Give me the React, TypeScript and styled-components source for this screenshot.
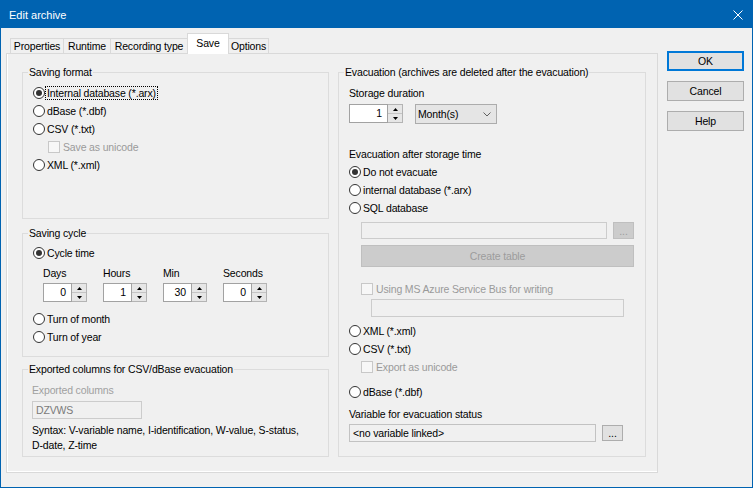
import styled, { createGlobalStyle } from 'styled-components';

type TabItem = { label: string; w: number; active?: boolean };

const TABS: TabItem[] = [
  { label: 'Properties', w: 54 },
  { label: 'Runtime', w: 48 },
  { label: 'Recording type', w: 78 },
  { label: 'Save', w: 42, active: true },
  { label: 'Options', w: 41 },
];

const CYCLE = [
  { label: 'Days', value: '0' },
  { label: 'Hours', value: '1' },
  { label: 'Min', value: '30' },
  { label: 'Seconds', value: '0' },
];

const GlobalStyle = createGlobalStyle`
  * { box-sizing: border-box; }
  html, body { margin: 0; padding: 0; background: #f0f0f0; }
  body {
    font-family: "Liberation Sans", Arial, sans-serif;
    font-size: 10.5px;
    letter-spacing: -0.15px;
    color: #000;
  }
`;

const Window = styled.div`
  width: 753px;
  height: 488px;
  display: flex;
  flex-direction: column;
  background: #f0f0f0;
  overflow: hidden;
`;

const TitleBar = styled.div`
  height: 28px;
  flex: none;
  display: flex;
  align-items: center;
  justify-content: space-between;
  padding: 2px 10px 0 9px;
  background: #0063b1;
  color: #fff;
  font-size: 11px;
  letter-spacing: 0;
`;

const Body = styled.div`
  flex: 1;
  display: flex;
  align-items: flex-start;
  padding: 5px 0 0 5px;
  border: 1px solid #0063b1;
  border-top: none;
`;

const TabArea = styled.div`
  width: 652px;
  display: flex;
  flex-direction: column;
`;

const TabStrip = styled.div`
  height: 20px;
  display: flex;
  align-items: flex-end;
  padding-left: 4px;
`;

const Tab = styled.div<{ $w: number; $active?: boolean }>`
  position: relative;
  z-index: ${(p) => (p.$active ? 2 : 1)};
  width: ${(p) => p.$w}px;
  height: ${(p) => (p.$active ? 21 : 15)}px;
  margin-bottom: ${(p) => (p.$active ? -1 : 0)}px;
  padding-top: ${(p) => (p.$active ? 2 : 0)}px;
  border: 1px solid #d9d9d9;
  border-bottom: none;
  background: ${(p) => (p.$active ? '#ffffff' : '#f0f0f0')};
  line-height: 14px;
  text-align: center;
  white-space: nowrap;

  & + & {
    margin-left: -1px;
  }
`;

const Panel = styled.div`
  height: 420px;
  border: 1px solid #d9d9d9;
  box-shadow: inset 1px -1px 0 #ffffff;
  display: grid;
  grid-template-columns: 307px 308px;
  column-gap: 9px;
  align-items: start;
  padding: 11px 0 0 15px;
`;

const Column = styled.div`
  display: flex;
  flex-direction: column;
`;

const GroupBox = styled.fieldset<{ $h: number; $mt?: number }>`
  margin: ${(p) => p.$mt ?? 0}px 0 0 0;
  padding: 0;
  min-width: 0;
  height: ${(p) => p.$h}px;
  border: 1px solid #dcdcdc;

  & > legend {
    margin-left: 5px;
    padding: 0 1px;
    line-height: 14px;
    white-space: nowrap;
  }
`;

const GroupInner = styled.div<{ $pt: number; $pl: number }>`
  display: flex;
  flex-direction: column;
  align-items: flex-start;
  padding: ${(p) => p.$pt}px 0 0 ${(p) => p.$pl}px;
`;

const Caption = styled.div<{ $mt?: number; $muted?: boolean }>`
  height: 18px;
  line-height: 18px;
  margin-top: ${(p) => p.$mt ?? 0}px;
  color: ${(p) => (p.$muted ? '#a0a0a0' : '#000')};
  white-space: nowrap;
`;

const OptionRow = styled.div<{ $mt?: number; $indent?: number; $disabled?: boolean; $gap: number }>`
  display: flex;
  align-items: center;
  gap: ${(p) => p.$gap}px;
  height: 18px;
  margin-top: ${(p) => p.$mt ?? 0}px;
  margin-left: ${(p) => p.$indent ?? 0}px;
  color: ${(p) => (p.$disabled ? '#9a9a9a' : '#000')};
  white-space: nowrap;
`;

const RadioMark = styled.span<{ $checked?: boolean }>`
  flex: none;
  width: 12px;
  height: 12px;
  border-radius: 50%;
  border: 1px solid #333333;
  background: #ffffff;
  display: flex;
  align-items: center;
  justify-content: center;

  &::after {
    content: '';
    display: ${(p) => (p.$checked ? 'block' : 'none')};
    width: 6px;
    height: 6px;
    border-radius: 50%;
    background: #333333;
  }
`;

const CheckMark = styled.span`
  flex: none;
  width: 12px;
  height: 12px;
  border: 1px solid #c8c8c8;
  background: #f7f7f7;
`;

const OptionText = styled.span<{ $focused?: boolean }>`
  padding: 0 1px;
  line-height: 12px;
  outline: ${(p) => (p.$focused ? '1px dotted #000' : 'none')};
`;

const CycleGrid = styled.div`
  display: grid;
  grid-template-columns: repeat(4, 60px);
  margin: 2px 0 0 10px;
`;

const CycleCell = styled.div`
  display: flex;
  flex-direction: column;
  gap: 1px;
`;

const SpinBox = styled.div`
  display: flex;
  height: 19px;
`;

const SpinInput = styled.div<{ $w: number }>`
  width: ${(p) => p.$w}px;
  height: 100%;
  border: 1px solid #a2a2a2;
  background: #ffffff;
  text-align: right;
  padding-right: 5px;
  line-height: 17px;
`;

const SpinButtons = styled.div`
  width: 15px;
  height: 100%;
  display: flex;
  flex-direction: column;
  border: 1px solid #b4b4b4;
  border-left: none;
  background: #e6e6e6;
`;

const SpinHalf = styled.div<{ $lower?: boolean }>`
  flex: 1;
  display: flex;
  align-items: center;
  justify-content: center;
  border-top: ${(p) => (p.$lower ? '1px solid #c4c4c4' : 'none')};
`;

const StorageRow = styled.div`
  display: flex;
  align-items: flex-start;
  margin-top: 2px;
`;

const Select = styled.div`
  margin-left: 12px;
  width: 82px;
  height: 20px;
  display: flex;
  align-items: center;
  justify-content: space-between;
  padding: 0 5px 0 2px;
  background: #e5e5e5;
  border: 1px solid #acacac;
`;

const FieldRow = styled.div<{ $mt: number; $indent: number }>`
  display: flex;
  align-items: center;
  margin-top: ${(p) => p.$mt}px;
  margin-left: ${(p) => p.$indent}px;
`;

const TextField = styled.div<{ $w: number; $h: number; $mt?: number; $muted?: boolean }>`
  width: ${(p) => p.$w}px;
  height: ${(p) => p.$h}px;
  margin-top: ${(p) => p.$mt ?? 0}px;
  border: 1px solid ${(p) => (p.$muted ? '#cccccc' : '#c2c2c2')};
  background: #f0f0f0;
  color: ${(p) => (p.$muted ? '#7a7a7a' : '#000')};
  padding-left: 3px;
  line-height: ${(p) => p.$h - 2}px;
  white-space: nowrap;
`;

const FlatButton = styled.div<{ $w: number; $h: number; $ml?: number; $mt?: number; $disabled?: boolean }>`
  width: ${(p) => p.$w}px;
  height: ${(p) => p.$h}px;
  margin-left: ${(p) => p.$ml ?? 0}px;
  margin-top: ${(p) => p.$mt ?? 0}px;
  display: flex;
  align-items: center;
  justify-content: center;
  background: ${(p) => (p.$disabled ? '#cccccc' : '#e1e1e1')};
  border: 1px solid ${(p) => (p.$disabled ? '#bfbfbf' : '#adadad')};
  color: ${(p) => (p.$disabled ? '#9c9c9c' : '#000')};
  white-space: nowrap;
`;

const SyntaxText = styled.div`
  margin-top: 4px;
  line-height: 15px;
  white-space: nowrap;
`;

const ButtonColumn = styled.div`
  margin-left: 9px;
  padding-top: 18px;
  display: flex;
  flex-direction: column;
  gap: 10px;
`;

const DialogButton = styled.div<{ $primary?: boolean }>`
  width: 77px;
  height: 20px;
  display: flex;
  align-items: center;
  justify-content: center;
  background: #e1e1e1;
  border: 1px solid ${(p) => (p.$primary ? '#0078d7' : '#adadad')};
  box-shadow: ${(p) => (p.$primary ? 'inset 0 0 0 1px #0078d7' : 'none')};
`;

const CloseIcon = () => (
  <svg width="10" height="10" viewBox="0 0 10 10">
    <path d="M0.5 0.5 L9.5 9.5 M9.5 0.5 L0.5 9.5" stroke="#ffffff" strokeWidth="1" fill="none" />
  </svg>
);

const Arrow = ({ up }: { up?: boolean }) => (
  <svg width="5" height="3" viewBox="0 0 5 3">
    <path d={up ? 'M0 3 L2.5 0 L5 3 Z' : 'M0 0 L2.5 3 L5 0 Z'} fill="#000" />
  </svg>
);

const Chevron = () => (
  <svg width="8" height="5" viewBox="0 0 8 5">
    <path d="M0.5 0.5 L4 4 L7.5 0.5" stroke="#606060" strokeWidth="1" fill="none" />
  </svg>
);

type OptionProps = { label: string; mt?: number; indent?: number; checked?: boolean; focused?: boolean };

const Radio = ({ label, mt, indent, checked, focused }: OptionProps) => (
  <OptionRow $mt={mt} $indent={indent} $gap={1}>
    <RadioMark $checked={checked} />
    <OptionText $focused={focused}>{label}</OptionText>
  </OptionRow>
);

const Check = ({ label, mt, indent }: OptionProps) => (
  <OptionRow $mt={mt} $indent={indent} $gap={2} $disabled>
    <CheckMark />
    <OptionText>{label}</OptionText>
  </OptionRow>
);

const Spinner = ({ value, w }: { value: string; w: number }) => (
  <SpinBox>
    <SpinInput $w={w}>{value}</SpinInput>
    <SpinButtons>
      <SpinHalf>
        <Arrow up />
      </SpinHalf>
      <SpinHalf $lower>
        <Arrow />
      </SpinHalf>
    </SpinButtons>
  </SpinBox>
);

export default function App() {
  return (
    <Window>
      <GlobalStyle />
      <TitleBar>
        <span>Edit archive</span>
        <CloseIcon />
      </TitleBar>
      <Body>
        <TabArea>
          <TabStrip>
            {TABS.map((t) => (
              <Tab key={t.label} $w={t.w} $active={t.active}>
                {t.label}
              </Tab>
            ))}
          </TabStrip>
          <Panel>
            <Column>
              <GroupBox $h={154}>
                <legend>Saving format</legend>
                <GroupInner $pt={5} $pl={10}>
                  <Radio label="Internal database (*.arx)" checked focused />
                  <Radio label="dBase (*.dbf)" />
                  <Radio label="CSV (*.txt)" />
                  <Check label="Save as unicode" indent={15} />
                  <Radio label="XML (*.xml)" />
                </GroupInner>
              </GroupBox>

              <GroupBox $h={131} $mt={7}>
                <legend>Saving cycle</legend>
                <GroupInner $pt={4} $pl={10}>
                  <Radio label="Cycle time" checked />
                  <CycleGrid>
                    {CYCLE.map((c) => (
                      <CycleCell key={c.label}>
                        <Caption>{c.label}</Caption>
                        <Spinner value={c.value} w={29} />
                      </CycleCell>
                    ))}
                  </CycleGrid>
                  <Radio label="Turn of month" mt={8} />
                  <Radio label="Turn of year" />
                </GroupInner>
              </GroupBox>

              <GroupBox $h={95} $mt={5}>
                <legend>Exported columns for CSV/dBase evacuation</legend>
                <GroupInner $pt={5} $pl={9}>
                  <Caption $muted>Exported columns</Caption>
                  <TextField $w={110} $h={18} $mt={2} $muted>
                    DZVWS
                  </TextField>
                  <SyntaxText>
                    Syntax: V-variable name, I-identification, W-value, S-status,
                    <br />
                    D-date, Z-time
                  </SyntaxText>
                </GroupInner>
              </GroupBox>
            </Column>

            <GroupBox $h={392}>
              <legend>Evacuation (archives are deleted after the evacuation)</legend>
              <GroupInner $pt={5} $pl={10}>
                <Caption>Storage duration</Caption>
                <StorageRow>
                  <Spinner value="1" w={39} />
                  <Select>
                    <span>Month(s)</span>
                    <Chevron />
                  </Select>
                </StorageRow>
                <Caption $mt={21}>Evacuation after storage time</Caption>
                <Radio label="Do not evacuate" checked />
                <Radio label="internal database (*.arx)" />
                <Radio label="SQL database" />
                <FieldRow $mt={5} $indent={12}>
                  <TextField $w={246} $h={17} $muted />
                  <FlatButton $w={21} $h={17} $ml={6} $disabled>
                    ...
                  </FlatButton>
                </FieldRow>
                <FieldRow $mt={6} $indent={12}>
                  <FlatButton $w={273} $h={22} $disabled>
                    Create table
                  </FlatButton>
                </FieldRow>
                <Check label="Using MS Azure Service Bus for writing" mt={13} indent={12} />
                <FieldRow $mt={1} $indent={22}>
                  <TextField $w={253} $h={18} $muted />
                </FieldRow>
                <Radio label="XML (*.xml)" mt={5} />
                <Radio label="CSV (*.txt)" />
                <Check label="Export as unicode" indent={12} />
                <Radio label="dBase (*.dbf)" mt={7} />
                <Caption $mt={4}>Variable for evacuation status</Caption>
                <FieldRow $mt={1} $indent={0}>
                  <TextField $w={247} $h={18}>
                    &lt;no variable linked&gt;
                  </TextField>
                  <FlatButton $w={21} $h={16} $ml={6}>
                    ...
                  </FlatButton>
                </FieldRow>
              </GroupInner>
            </GroupBox>
          </Panel>
        </TabArea>
        <ButtonColumn>
          <DialogButton $primary>OK</DialogButton>
          <DialogButton>Cancel</DialogButton>
          <DialogButton>Help</DialogButton>
        </ButtonColumn>
      </Body>
    </Window>
  );
}
